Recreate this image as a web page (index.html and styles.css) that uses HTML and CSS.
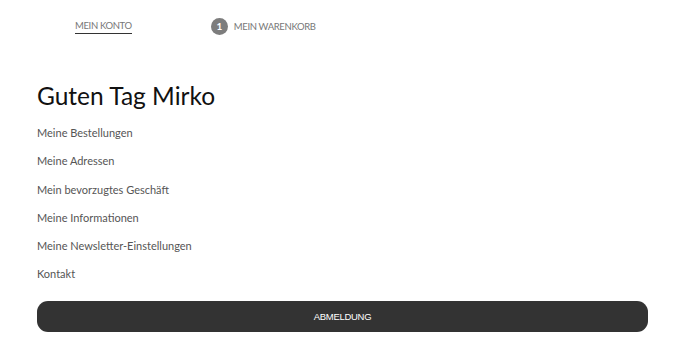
FILE: index.html
```html
<!DOCTYPE html>
<html lang="de">
<head>
<meta charset="utf-8">
<link rel="stylesheet" href="styles.css">
</head>
<body>
<header class="topnav">
  <a class="nav-item nav-active" href="#">MEIN KONTO</a>
  <a class="nav-item nav-cart" href="#"><span class="badge">1</span>MEIN WARENKORB</a>
</header>
<main class="account">
  <h1 class="greeting">Guten Tag Mirko</h1>
  <ul class="menu">
    <li><a href="#">Meine Bestellungen</a></li>
    <li><a href="#">Meine Adressen</a></li>
    <li><a href="#">Mein bevorzugtes Geschäft</a></li>
    <li><a href="#">Meine Informationen</a></li>
    <li><a href="#">Meine Newsletter-Einstellungen</a></li>
    <li><a href="#">Kontakt</a></li>
  </ul>
  <button class="logout">ABMELDUNG</button>
</main>
</body>
</html>
```
FILE: styles.css
```css
* { box-sizing: border-box; }
body {
  margin: 0;
  background: #fff;
  font-family: "Lato", "Liberation Sans", sans-serif;
  color: #333;
}
a { text-decoration: none; color: inherit; }
.topnav {
  display: flex;
  align-items: flex-start;
  height: 54px;
  padding: 18px 0 0 75px;
  gap: 79px;
}
.nav-item {
  font-size: 9.5px;
  line-height: 11px;
  color: #777;
  letter-spacing: -0.35px;
  display: flex;
  align-items: center;
}
.nav-active {
  border-bottom: 1.5px solid #333;
  padding: 0 0 2px;
  margin-top: 1.5px;
}
.badge {
  width: 17px;
  height: 17px;
  border-radius: 50%;
  background: #7d7d7d;
  color: #fff;
  font-size: 10px;
  font-weight: 700;
  display: inline-flex;
  align-items: center;
  justify-content: center;
  margin-right: 6px;
}
.account {
  padding: 28px 27px 0 37px;
}
.greeting {
  margin: 0;
  font-weight: 400;
  font-size: 24.5px;
  color: #111;
  line-height: 28px;
}
.menu {
  list-style: none;
  margin: 16px 0 0;
  padding: 0;
}
.menu li {
  font-size: 11px;
  color: #555;
  font-weight: 400;
  height: 28.3px;
  line-height: 14px;
}
.logout {
  display: block;
  width: 100%;
  height: 31px;
  margin-top: 5px;
  border: none;
  border-radius: 11px;
  background: #333;
  color: #fff;
  font-family: "Liberation Sans", sans-serif;
  font-size: 9.5px;
  letter-spacing: -0.3px;
}
```
